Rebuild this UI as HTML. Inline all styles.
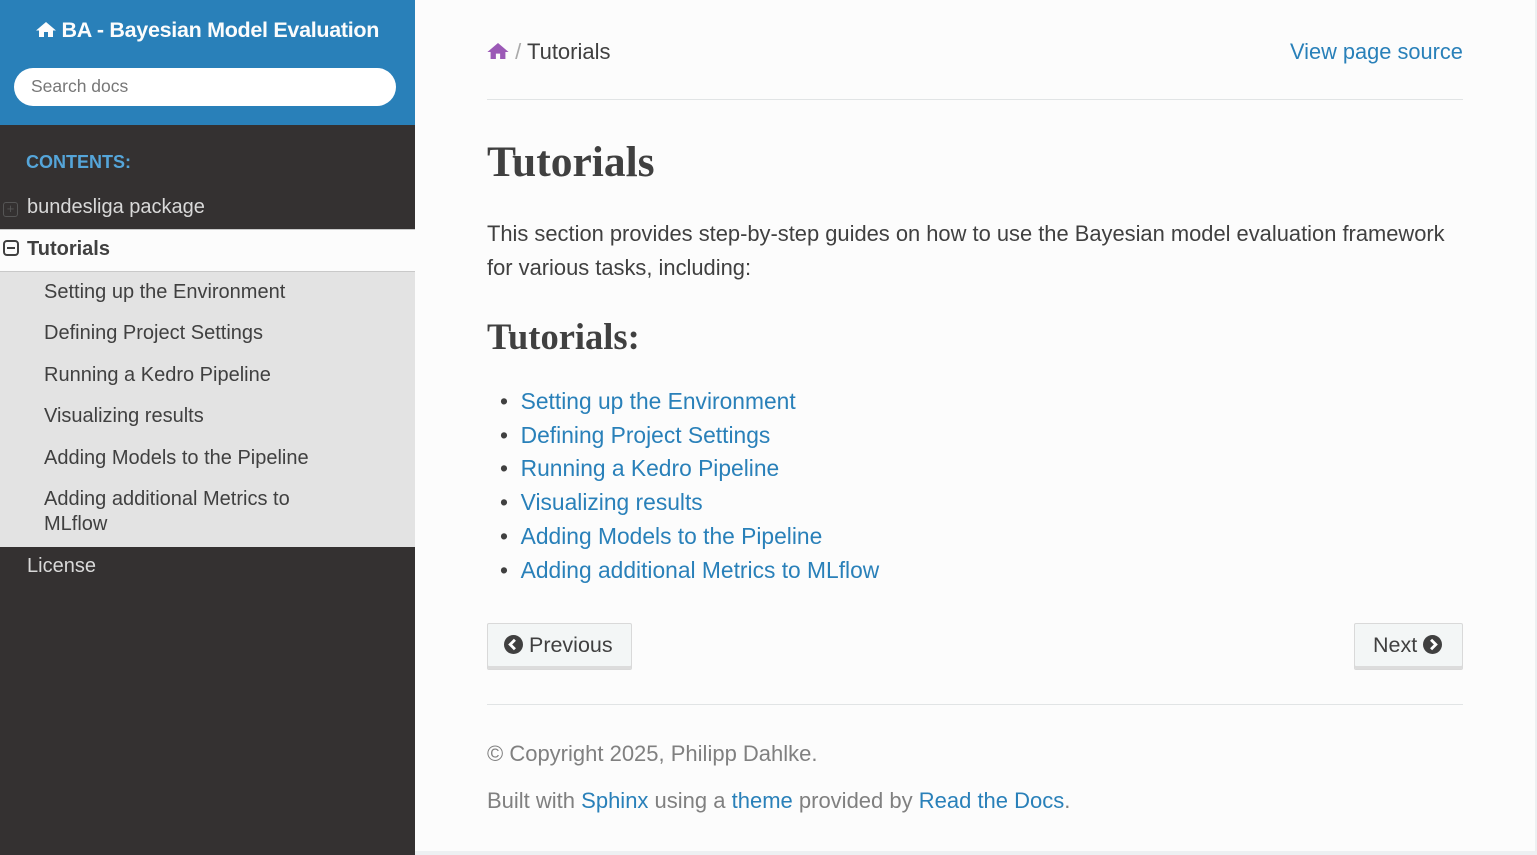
<!DOCTYPE html>
<html><head><meta charset="utf-8"><style>
*{margin:0;padding:0;box-sizing:border-box}
body{width:1537px;height:855px;overflow:hidden;background:#edf0f2;font-family:"Liberation Sans",sans-serif;position:relative}
.side{position:absolute;left:0;top:0;width:415px;height:855px;background:#343131}
.top{position:absolute;left:0;top:0;width:415px;height:125px;background:#2980b9}
.title{position:absolute;left:0;width:415px;top:18px;text-align:center;color:#fcfcfc;font-weight:bold;font-size:21.5px;letter-spacing:-0.3px}
.search{position:absolute;left:14px;top:68px;width:382px;height:38px;border-radius:19px;background:#fff;color:#777;font-size:17.5px;padding:8px 0 0 17px}
.cap{position:absolute;left:26px;top:152px;color:#55a5d9;font-weight:bold;font-size:18px}
.it{position:absolute;font-size:20px;white-space:nowrap}
.cur{position:absolute;left:0;top:229px;width:415px;height:43px;background:#fcfcfc;border-top:1px solid #c9c9c9;border-bottom:1px solid #c9c9c9}
.sub{position:absolute;left:0;top:272px;width:415px;height:275px;background:#e3e3e3}
.main{position:absolute;left:415px;top:0;width:1120px;height:851px;background:#fcfcfc}
a{color:#2980b9;text-decoration:none}
.t{position:absolute;white-space:nowrap}
hr{position:absolute;left:487px;width:976px;border:0;border-top:1px solid #e1e4e5}
.btn{position:absolute;top:623px;height:47px;background:#f3f6f6;border:1px solid #d9d9d9;box-shadow:inset 0 -3px 0 #dcdcdc;font-size:21.5px;color:#404040;padding:9px 16px;border-radius:2px;white-space:nowrap}
</style></head><body>
<div class="side"></div>
<div class="top"></div>
<div class="title"><svg width="20" height="17" viewBox="0 0 20 17" style="vertical-align:-1px"><path d="M10 1L0 9.5h3V16h5v-5h4v5h5V9.5h3z" fill="#fcfcfc"/></svg> BA - Bayesian Model Evaluation</div>
<div class="search">Search docs</div>
<div class="cap">CONTENTS:</div>
<div class="it" style="left:3px;top:196px;color:#d9d9d9"><span style="display:inline-block;width:15px;height:15px;border:1px solid #555;border-radius:3px;vertical-align:0px;margin-right:9px;color:#555;font-size:13px;line-height:12px;text-align:center">+</span>bundesliga package</div>
<div class="cur"></div>
<div class="it" style="left:3px;top:238px;color:#404040;font-weight:bold"><span style="display:inline-block;width:16px;height:16px;border:2px solid #404040;border-radius:4px;vertical-align:-1px;margin-right:8px;position:relative"><span style="position:absolute;left:2px;right:2px;top:5px;height:2px;background:#404040"></span></span>Tutorials</div>
<div class="sub"></div>
<div class="it" style="left:44px;top:281px;color:#404040">Setting up the Environment</div>
<div class="it" style="left:44px;top:322px;color:#404040">Defining Project Settings</div>
<div class="it" style="left:44px;top:364px;color:#404040">Running a Kedro Pipeline</div>
<div class="it" style="left:44px;top:405px;color:#404040">Visualizing results</div>
<div class="it" style="left:44px;top:447px;color:#404040">Adding Models to the Pipeline</div>
<div class="it" style="left:44px;top:487px;color:#404040;line-height:25px">Adding additional Metrics to<br>MLflow</div>
<div class="it" style="left:27px;top:555px;color:#d9d9d9">License</div>
<div class="main"></div>
<div class="t" style="left:487px;top:39px;font-size:22px;color:#404040"><svg width="22" height="18" viewBox="0 0 20 17" style="vertical-align:-1px"><path d="M10 1L0 9.5h3V16h5v-5h4v5h5V9.5h3z" fill="#9b59b6"/></svg> <span style="color:#aaa">/</span> Tutorials</div>
<div class="t" style="left:1290px;top:39px;font-size:21.8px"><a>View page source</a></div>
<hr style="top:99px">
<div class="t" style="left:487px;top:137px;font-family:'Liberation Serif',serif;font-weight:bold;font-size:43.5px;color:#404040">Tutorials</div>
<div class="t" style="left:487px;top:217px;font-size:21.9px;color:#404040;line-height:34px">This section provides step-by-step guides on how to use the Bayesian model evaluation framework<br>for various tasks, including:</div>
<div class="t" style="left:487px;top:315px;font-family:'Liberation Serif',serif;font-weight:bold;font-size:36.5px;color:#404040">Tutorials:</div>
<div class="t" style="left:500px;top:385px;font-size:22.8px;line-height:33.7px;color:#404040">
<div>•&nbsp;&nbsp;<a>Setting up the Environment</a></div>
<div>•&nbsp;&nbsp;<a>Defining Project Settings</a></div>
<div>•&nbsp;&nbsp;<a>Running a Kedro Pipeline</a></div>
<div>•&nbsp;&nbsp;<a>Visualizing results</a></div>
<div>•&nbsp;&nbsp;<a>Adding Models to the Pipeline</a></div>
<div>•&nbsp;&nbsp;<a>Adding additional Metrics to MLflow</a></div>
</div>
<div class="btn" style="left:487px;width:145px"><svg width="19" height="19" viewBox="0 0 20 20" style="vertical-align:-2px"><circle cx="10" cy="10" r="10" fill="#404040"/><path d="M11.5 5L6.5 10l5 5" stroke="#fff" stroke-width="3" fill="none"/></svg> Previous</div>
<div class="btn" style="left:1354px;width:109px;padding-left:18px">Next <svg width="19" height="19" viewBox="0 0 20 20" style="vertical-align:-2px"><circle cx="10" cy="10" r="10" fill="#404040"/><path d="M8.5 5l5 5-5 5" stroke="#fff" stroke-width="3" fill="none"/></svg></div>
<hr style="top:704px">
<div class="t" style="left:487px;top:741px;font-size:22px;color:#808080">© Copyright 2025, Philipp Dahlke.</div>
<div class="t" style="left:487px;top:788px;font-size:22px;color:#808080">Built with <a>Sphinx</a> using a <a>theme</a> provided by <a>Read the Docs</a>.</div>
</body></html>
